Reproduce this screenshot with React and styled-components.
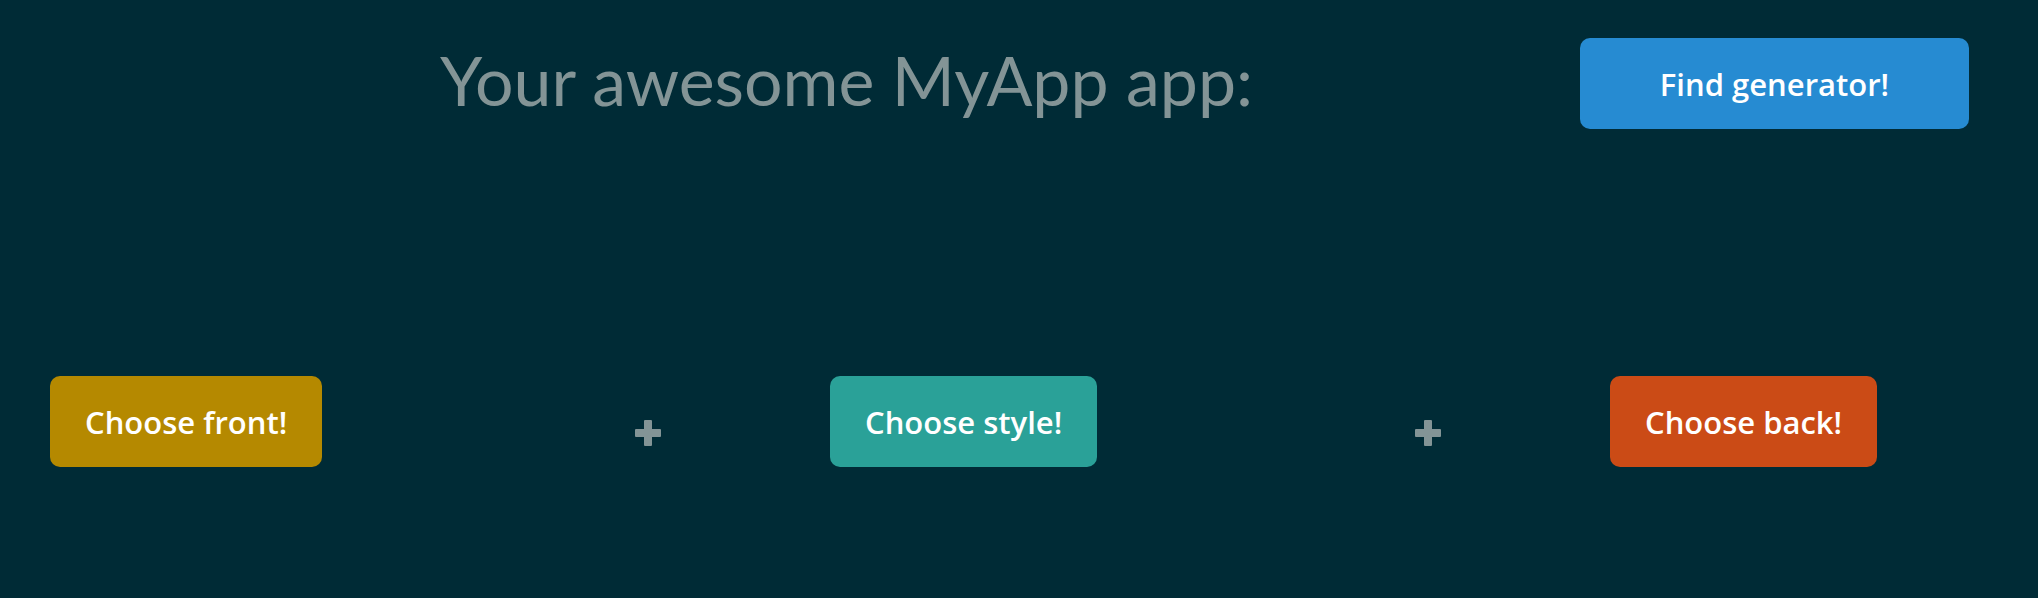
import React from "react";
import styled, { createGlobalStyle } from "styled-components";

const GlobalStyle = createGlobalStyle`
  body {
    margin: 0;
    background: #002b36;
    font-family: "Lato", "Open Sans", sans-serif;
  }
`;

const Page = styled.div`
  width: 2038px;
  height: 598px;
  overflow: hidden;
  background: #002b36;
`;

const Header = styled.header`
  display: flex;
  align-items: center;
  justify-content: space-between;
  padding: 38px 69px 0 440px;
`;

const Title = styled.h1`
  margin: 0;
  margin-top: -8px;
  font-size: 68px;
  font-weight: 400;
  color: #839496;
  line-height: 1;
`;

const Button = styled.button`
  border: none;
  border-radius: 10px;
  height: 91px;
  padding: 0 35px;
  font-family: "Open Sans", "Lato", sans-serif;
  font-size: 31px;
  font-weight: 600;
  color: #ffffff;
  background: ${(p) => p.$bg};
  cursor: pointer;
`;

const FindButton = styled(Button)`
  width: 389px;
`;

const Row = styled.div`
  display: flex;
  padding-left: 50px;
  margin-top: 247px;
`;

const Slot = styled.div`
  flex: 0 0 ${(p) => (p.$last ? "auto" : "780px")};
  box-sizing: border-box;
  padding-right: ${(p) => (p.$last ? 0 : 169)}px;
  display: flex;
  align-items: center;
  justify-content: space-between;
`;

const Plus = styled.span`
  margin-top: 22px;
  width: 26px;
  height: 26px;
  position: relative;
  &::before,
  &::after {
    content: "";
    position: absolute;
    background: #839496;
    border-radius: 1px;
  }
  &::before {
    left: 9px;
    top: 0;
    width: 8px;
    height: 26px;
  }
  &::after {
    left: 0;
    top: 9px;
    width: 26px;
    height: 8px;
  }
`;

const choices = [
  { label: "Choose front!", bg: "#b58900" },
  { label: "Choose style!", bg: "#2aa198" },
  { label: "Choose back!", bg: "#cb4b16" },
];

export default function App() {
  return (
    <Page>
      <GlobalStyle />
      <Header>
        <Title>Your awesome MyApp app:</Title>
        <FindButton $bg="#268bd2">Find generator!</FindButton>
      </Header>
      <Row>
        {choices.map((c, i) => {
          const last = i === choices.length - 1;
          return (
            <Slot key={c.label} $last={last}>
              <Button $bg={c.bg}>{c.label}</Button>
              {!last && <Plus />}
            </Slot>
          );
        })}
      </Row>
    </Page>
  );
}
